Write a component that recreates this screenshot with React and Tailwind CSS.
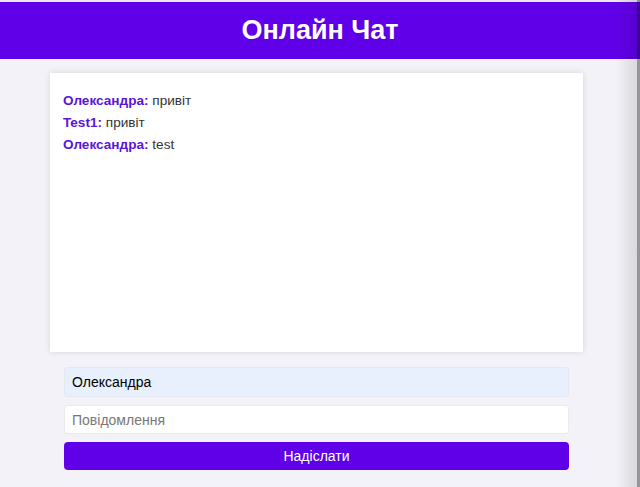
import React from "react";

export default function App() {
  const msgs = [
    ["Олександра", "привіт"],
    ["Test1", "привіт"],
    ["Олександра", "test"],
  ];
  return (
    <div className="relative w-[640px] h-[487px] overflow-hidden bg-[#f3f2f8] pt-[2px]" style={{ fontFamily: '"Liberation Sans", Arial, sans-serif' }}>
      <div className="absolute top-0 left-0 w-full h-[2px] bg-[#e9e6f0]" />
      <header className="h-[57px] bg-[#6000e8] flex items-center justify-center">
        <h1 className="text-white font-bold text-[27px] leading-none">Онлайн Чат</h1>
      </header>
      <div className="ml-[50px] mt-[14px] w-[533px] h-[279px] bg-white shadow-[0_0_6px_rgba(0,0,0,0.12)] pt-[17px] px-[13px]">
        {msgs.map(([n, t], i) => (
          <div key={i} className="text-[13.6px] leading-[22px] text-[#333]">
            <span className="font-bold text-[#5c14d8]">{n}:</span> {t}
          </div>
        ))}
      </div>
      <div className="ml-[64px] mt-[15px] w-[505px] flex flex-col gap-[8px]">
        <input
          defaultValue="Олександра"
          className="h-[30px] px-[7px] bg-[#e8f0fe] border border-[#e3e8f3] rounded-[3px] text-[14px] text-black outline-none"
          style={{ fontFamily: '"Liberation Sans", Arial, sans-serif' }}
        />
        <input
          placeholder="Повідомлення"
          className="h-[29px] px-[7px] bg-white border border-[#ebe9ee] rounded-[3px] text-[14px] placeholder:text-[#777] outline-none"
          style={{ fontFamily: '"Liberation Sans", Arial, sans-serif' }}
        />
        <button
          className="h-[28px] bg-[#6000e8] text-white text-[14px] rounded-[4px]"
          style={{ fontFamily: '"Liberation Sans", Arial, sans-serif' }}
        >
          Надіслати
        </button>
      </div>
      <div className="absolute top-0 right-0 h-full w-[24px] bg-gradient-to-r from-transparent to-[rgba(0,0,0,0.12)]" />
      <div className="absolute top-0 right-0 h-full w-[3px] bg-[rgba(0,0,0,0.3)]" />
    </div>
  );
}
